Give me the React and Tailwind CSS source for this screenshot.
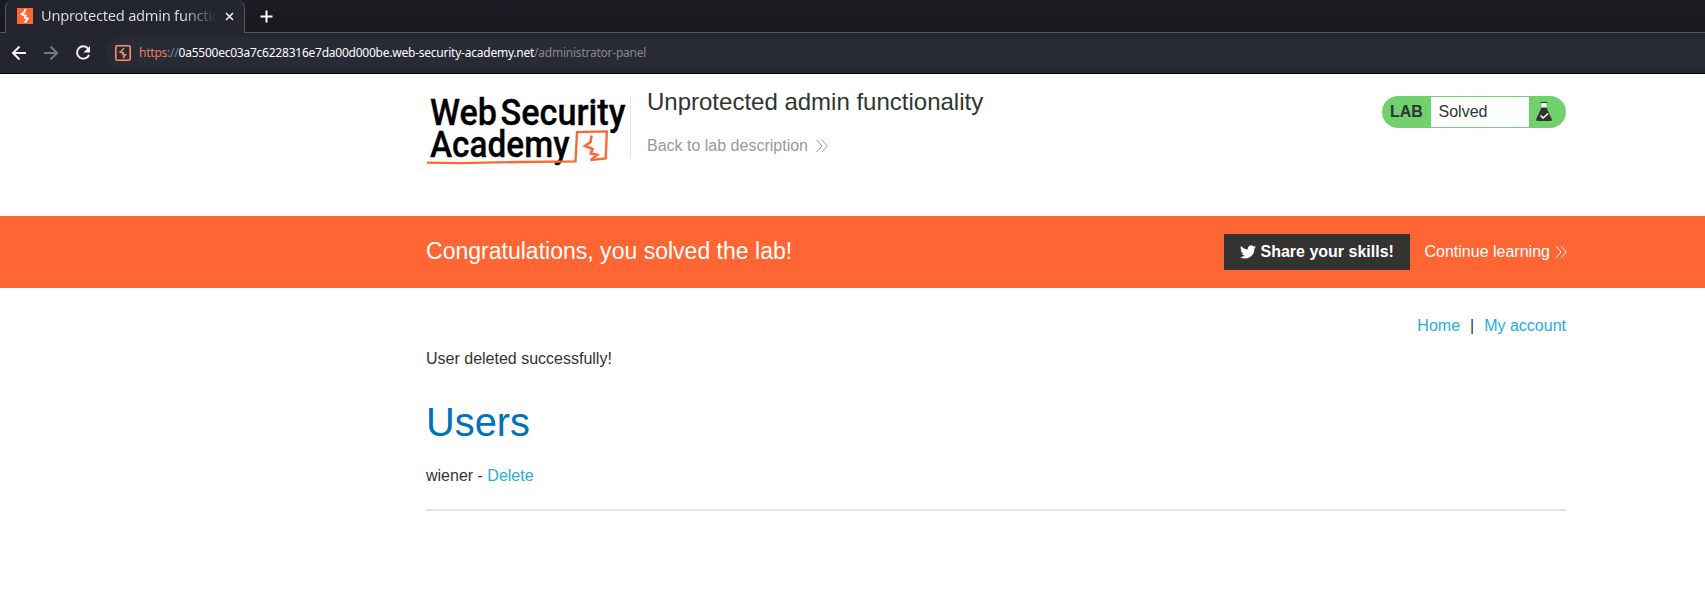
const chevrons = (stroke) => (
  <svg width="12" height="14" viewBox="0 0 12 14" fill="none" stroke={stroke} strokeWidth="1" className="block">
    <path d="M0.6 1L6 7L0.6 13M6 1L11.4 7L6 13" />
  </svg>
);

function Logo() {
  return (
    <svg width="204" height="90" viewBox="426 91 204 90" className="block h-[90px] w-[204px] shrink-0 overflow-visible">
      <g fill="#000" stroke="#000" strokeWidth="0.3" fontFamily="Roboto, 'Liberation Sans', sans-serif" fontSize="37.5" fontWeight="500">
        <text x="430" y="125" textLength="67" lengthAdjust="spacingAndGlyphs">Web</text>
        <text x="500.5" y="125" textLength="125" lengthAdjust="spacingAndGlyphs">Security</text>
        <text x="430" y="157.300" textLength="139.500" lengthAdjust="spacingAndGlyphs">Academy</text>
      </g>
      <g fill="none" stroke="#ff6633" strokeLinejoin="miter">
        <path d="M427 162.600L460 163.200L520 162L575.500 161.300L577 132.200L606.800 131.400L605.800 158.500L590.500 160.200" strokeWidth="2.300" />
        <path d="M591.600 135.500L590.500 142L585 146L592.500 149L590.800 153.500L597.300 154.800L590.800 160.200" strokeWidth="2.500" />
      </g>
    </svg>
  );
}

function Browser() {
  return (
    <div className="flex h-[74px] flex-col border-b border-black bg-[#23252f] font-['Noto_Sans',sans-serif]">
      <div className="flex h-[33px] bg-linear-to-b from-[#1b1d26] to-[#17181b]">
        <div className="w-[5px] border-b border-[#555861]" />
        <div className="flex h-[33px] w-60 items-center rounded-t-lg border-x border-[#555861] bg-[#23252f] pl-[11px]">
          <svg width="16" height="16" viewBox="0 0 16 16" className="-mt-px shrink-0">
            <path fill="#ff6633" d="M0 0h16v16H0z" />
            <path fill="none" stroke="#fff" strokeWidth="1.9" d="M8.600 .8L7.500 3.600L4.600 6.300L8.700 7.600L7.800 9.900L10.800 10.500L7.800 14.800" />
          </svg>
          <div className="-mt-[3px] ml-2 w-[176px] overflow-hidden whitespace-nowrap bg-linear-to-r from-[#e0e1e3] from-80% to-transparent bg-clip-text text-[14.67px] leading-5 tracking-[-0.27px] text-transparent">Unprotected admin functionality</div>
          <svg width="9" height="9" viewBox="0 0 9 9" className="ml-2 shrink-0" stroke="#eee" strokeWidth="1.7"><path d="M1 1l7 7M8 1L1 8" /></svg>
        </div>
        <div className="flex flex-1 items-center border-b border-[#555861] pl-[15px]">
          <svg width="13" height="13" viewBox="0 0 13 13" stroke="#fff" strokeWidth="2"><path d="M6.5 .5v12M.5 6.5h12" /></svg>
        </div>
      </div>
      <div className="flex h-10 items-center pl-[11px]">
        <svg width="16" height="16" viewBox="0 0 16 16" fill="none" stroke="#f2f2f3" strokeWidth="2"><path d="M15 8H2.5M8.5 1.5L2 8l6.5 6.5" /></svg>
        <svg width="16" height="16" viewBox="0 0 16 16" fill="none" stroke="#777980" strokeWidth="2" className="ml-4"><path d="M1 8h12.5M7.5 1.5L14 8l-6.5 6.5" /></svg>
        <svg width="16" height="16" viewBox="0 0 16 16" fill="none" className="ml-4"><path stroke="#f2f2f3" strokeWidth="2" d="M13.2 3.8A6.2 6.2 0 1 0 14 9.8" /><path fill="#f2f2f3" d="M15 1v6.5H8.5z" /></svg>
        <div className="ml-[14px] flex h-8 flex-1 items-center rounded-l-full bg-[#282a35] pl-[10px]">
          <svg width="16" height="16" viewBox="0 0 16 16" className="shrink-0" fill="none" stroke="#f5906a">
            <rect x=".8" y=".8" width="14.4" height="14.4" rx="1.5" strokeWidth="1.6" />
            <path strokeWidth="1.5" d="M8.600 3L7.800 4.800L5.200 7.200L8.500 8L7.800 9.600L10.500 9.800L8 13" />
          </svg>
          <div className="ml-2 whitespace-nowrap text-xs leading-4 tracking-[-0.235px] text-[#858891]"><span className="text-[#e77f5c]">https</span>://<span className="text-white">0a5500ec03a7c6228316e7da00d000be.web-security-academy.net</span>/administrator-panel</div>
        </div>
      </div>
    </div>
  );
}

export default function App() {
  return (
    <div className="h-[604px] w-[1705px] overflow-hidden bg-white font-['Liberation_Sans',sans-serif] text-base text-[#333332]">
      <Browser />
      <header className="flex h-[142px] pt-[17px] pl-[426px]">
        <Logo />
        <div className="mt-[5px] h-[62px] w-px bg-[#e4e4e4]" />
        <div className="ml-4 w-[735px]">
          <h2 className="-mt-[3px] text-2xl leading-7">Unprotected admin functionality</h2>
          <a className="mt-[21px] flex items-center leading-[18px] text-[#999]">Back to lab description<span className="ml-2">{chevrons("#999")}</span></a>
        </div>
        <div className="mt-[5px] flex h-8 w-[184px] overflow-hidden rounded-full bg-[#70d16d] py-px leading-[30px]">
          <b className="w-[49px] pl-2">LAB</b>
          <span className="w-[98px] bg-white pl-[7.5px]">Solved</span>
          <svg width="18" height="22" viewBox="0 0 18 22" className="mt-1 ml-[6px]"><path fill="#fff" d="M6.5 2h5v5h-5z" /><path d="M5.5 1.5h7" stroke="#333332" /><path fill="#333332" d="M6.500 6.500h5l5.200 11.500q.8 2-1 2H2.300q-1.800 0-1-2z" /><path fill="none" stroke="#fff" strokeWidth="1.5" d="M5.500 14.500l2.600 2.500 5-4.500" /></svg>
        </div>
      </header>
      <section className="flex h-[72px] items-center bg-[#ff6633] pl-[426px] text-white">
        <p className="-mt-0.5 w-[798px] text-[23.04px] leading-7">Congratulations, you solved the lab!</p>
        <button className="flex h-9 w-[186px] items-center bg-[#333332] pl-4 font-bold">
          <svg width="16" height="14" viewBox="0 0 24 20" className="mr-[4.5px] shrink-0"><path fill="#fff" d="M24 2.4a9.800 9.800 0 0 1-2.800.8A5 5 0 0 0 23.300.5a10 10 0 0 1-3.100 1.200A4.900 4.900 0 0 0 11.800 6.200 14 14 0 0 1 1.700 1a4.900 4.900 0 0 0 1.500 6.600A4.900 4.900 0 0 1 1 7v.1a4.900 4.900 0 0 0 3.900 4.800 5 5 0 0 1-2.200.1 4.900 4.900 0 0 0 4.600 3.400A9.900 9.900 0 0 1 0 17.500 14 14 0 0 0 21.500 5z" /></svg>
          <span className="whitespace-nowrap">Share your skills!</span>
        </button>
        <a className="ml-[14.5px] flex items-center whitespace-nowrap">Continue learning<span className="ml-[5px]">{chevrons("#fff")}</span></a>
      </section>
      <main className="ml-[426px] w-[1140px]">
        <nav className="flex justify-end gap-[10px] pt-[26px] leading-6 text-[#29abe2]"><a>Home</a><span className="text-[#333332]">|</span><a>My account</a></nav>
        <p className="mt-[9px] leading-6">User deleted successfully!</p>
        <h1 className="mt-7 text-[39.8px] leading-[46px] text-[#0071bc]">Users</h1>
        <p className="mt-[19px] leading-6">wiener - <a className="text-[#29abe2]">Delete</a></p>
        <hr className="mt-[21px] border-0 border-t-2 border-[#e4e4e4]" />
      </main>
    </div>
  );
}
